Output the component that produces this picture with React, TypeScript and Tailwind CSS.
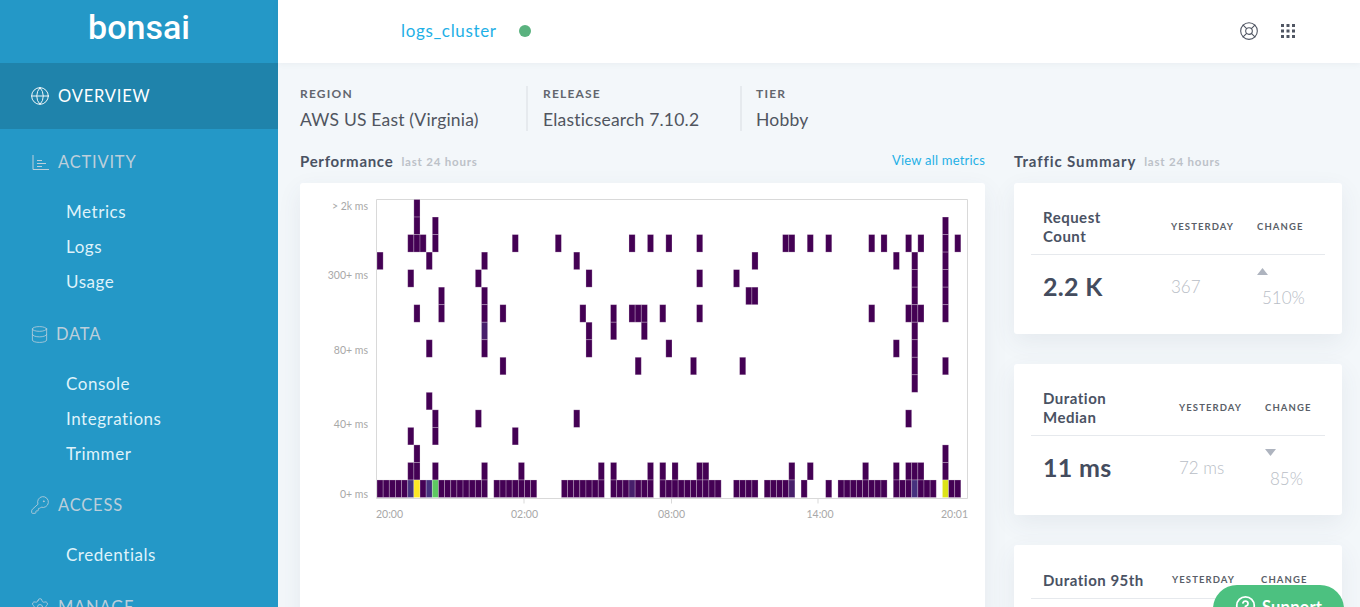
import React from 'react';
import { Globe, Database, KeyRound, Settings, LifeBuoy, CircleHelp } from 'lucide-react';

const font = '[font-family:Lato,"Open_Sans",sans-serif]';

// heatmap buckets, row -> columns (96 columns, 17 rows, top row is slowest)
const rows: number[][] = [
  [6],
  [6, 9, 92],
  [5, 6, 7, 9, 22, 29, 41, 44, 47, 52, 66, 67, 70, 73, 80, 82, 86, 88, 92, 94],
  [0, 8, 17, 32, 61, 84, 87, 92],
  [5, 16, 34, 52, 58, 87, 92],
  [10, 17, 60, 61, 87, 92],
  [6, 10, 17, 20, 33, 38, 41, 42, 43, 46, 52, 80, 86, 87, 88, 92],
  [17, 34, 38, 43, 87],
  [8, 17, 34, 47, 84, 87],
  [20, 42, 51, 59, 87, 92],
  [87],
  [8],
  [9, 16, 32, 86],
  [5, 9, 22],
  [6, 92],
  [5, 6, 9, 17, 23, 36, 38, 44, 46, 48, 52, 53, 67, 70, 79, 84, 86, 87, 88, 92],
];

const range = (a: number, b: number) => Array.from({ length: b - a + 1 }, (_, i) => a + i);
const bottomRow = [
  ...range(0, 17), ...range(19, 25), ...range(30, 36), ...range(38, 44), ...range(46, 55),
  ...range(58, 61), ...range(63, 67), 69, 73, ...range(75, 82), ...range(84, 90), 92, 93, 94,
];
const special: Record<number, string> = {
  5: '#46327e',
  6: '#fde725',
  8: '#46327e',
  9: '#5ec962',
  41: '#471f6b',
  67: '#471f6b',
  87: '#46327e',
  92: '#dde318',
};

const cellW = 590 / 96;
const cellH = 298 / 17;

function Heatmap() {
  const ox = 77;
  const oy = 16.5;
  const cell = (r: number, c: number, fill: string) => (
    <rect
      key={`${r}-${c}`}
      x={ox + c * cellW}
      y={oy + r * cellH}
      width={cellW}
      height={cellH}
      fill={fill}
      stroke="#fff"
      strokeOpacity={0.3}
      strokeWidth={0.8}
    />
  );
  return (
    <svg width="685" height="345" className="block" fontFamily="Lato, sans-serif" fontSize="10.5" fill="#a8a8a8">
      <path d="M76.5 16.5H667.5V315.5H76.5Z" fill="none" stroke="#d9d9d9" />
      {rows.map((cols, r) => cols.map(c => cell(r, c, r === 7 && c === 17 ? '#471f6b' : '#440154')))}
      {bottomRow.map(c => cell(16, c, special[c] ?? '#440154'))}
      {[224, 371.5, 518].map(x => (
        <path key={x} d={`M${x} 315.5V320.5`} stroke="#d9d9d9" />
      ))}
      <text x="68" y="27" textAnchor="end">&gt; 2k ms</text>
      <text x="68" y="96" textAnchor="end">300+ ms</text>
      <text x="68" y="171" textAnchor="end">80+ ms</text>
      <text x="68" y="245" textAnchor="end">40+ ms</text>
      <text x="68" y="315" textAnchor="end">0+ ms</text>
      <text x="76" y="335">20:00</text>
      <text x="224.5" y="335" textAnchor="middle">02:00</text>
      <text x="371.5" y="335" textAnchor="middle">08:00</text>
      <text x="520" y="335" textAnchor="middle">14:00</text>
      <text x="668" y="335" textAnchor="end">20:01</text>
    </svg>
  );
}

function ChartIcon() {
  return (
    <svg width="17" height="17" viewBox="0 0 17 17" fill="none" stroke="currentColor" strokeWidth="1" className="ml-[2px]">
      <path d="M1 1V15.5H17M5 6.5H10M5 9.5H14M5 12.5H10" />
    </svg>
  );
}

function NavHead({ icon, label, gap }: { icon: React.ReactNode; label: string; gap: string }) {
  return (
    <div className={`flex items-center pl-[30px] h-[24px] text-[#bccfdb] text-[16.5px] tracking-[0.8px] ${gap}`}>
      {icon}
      <span>{label}</span>
    </div>
  );
}

function NavSub({ items }: { items: string[] }) {
  return (
    <div className="pl-[66px] mt-[26px] flex flex-col gap-[11px] text-[17px] leading-[24px] tracking-[0.55px] text-[#dff2fa]">
      {items.map(item => (
        <div key={item}>{item}</div>
      ))}
    </div>
  );
}

function Sidebar() {
  return (
    <aside className="w-[278px] shrink-0 h-full bg-[#2498c7] overflow-hidden">
      <div className="h-[63px] flex items-center justify-center pb-[8px] text-white text-[34px] font-medium [font-family:Roboto,sans-serif]">
        bonsai
      </div>
      <div className="h-[66px] bg-[#1f83ab] flex items-center pl-[30px] gap-[8px] text-white text-[16.5px] tracking-[0.8px]">
        <Globe size={20} strokeWidth={1.1} />
        <span>OVERVIEW</span>
      </div>
      <div className="mt-[21px]">
        <NavHead icon={<ChartIcon />} label="ACTIVITY" gap="gap-[9px]" />
        <NavSub items={['Metrics', 'Logs', 'Usage']} />
      </div>
      <div className="mt-[28px]">
        <NavHead icon={<Database size={19} strokeWidth={1} />} label="DATA" gap="gap-[7px]" />
        <NavSub items={['Console', 'Integrations', 'Trimmer']} />
      </div>
      <div className="mt-[27px]">
        <NavHead icon={<KeyRound size={20} strokeWidth={1} />} label="ACCESS" gap="gap-[8px]" />
        <NavSub items={['Credentials']} />
      </div>
      <div className="mt-[28px]">
        <NavHead icon={<Settings size={20} strokeWidth={1} />} label="MANAGE" gap="gap-[8px]" />
      </div>
    </aside>
  );
}

function Meta({ label, value, className }: { label: string; value: string; className: string }) {
  return (
    <div className={className}>
      <div className="text-[12px] font-bold tracking-[1.2px] leading-[16px] text-[#62666e]">{label}</div>
      <div className="mt-[6px] text-[17.5px] leading-[24px] tracking-[0.2px] text-[#50555f]">{value}</div>
    </div>
  );
}

function Summary({
  title,
  cols,
  head,
  value,
  prev,
  change,
  up,
}: {
  title: React.ReactNode;
  cols: string;
  head: string;
  value?: string;
  prev?: string;
  change?: string;
  up?: boolean;
}) {
  return (
    <div className="bg-white rounded-[3px] shadow-[0_8px_24px_rgba(60,80,100,0.08)] px-[17px] pt-[17px] pb-[17px]">
      <div className={`grid items-center pl-3 border-b border-[#e6e9ed] ${cols} ${head}`}>
        <div className="text-[15px] font-bold leading-[19px] tracking-[0.5px] text-[#4a5263]">{title}</div>
        <div className="text-[9.5px] font-bold tracking-[1.1px] text-[#5a5f69]">YESTERDAY</div>
        <div className="text-[9.5px] font-bold tracking-[1.1px] text-[#5a5f69]">CHANGE</div>
      </div>
      {value && (
        <div className={`grid pl-3 h-[62px] ${cols}`}>
          <div className="self-center mt-[2px] text-[25px] font-bold text-[#444c5e] tracking-[0.3px]">{value}</div>
          <div className="self-center mt-[2px] text-[17px] text-[#b8bdc6] font-light">{prev}</div>
          <div className="relative text-[17px] text-[#b8bdc6] font-light">
            <svg width="11" height="7" viewBox="0 0 11 7" className="absolute left-0 top-[13px]" fill="#aeb4bf">
              <path d={up ? 'M5.5 0L11 7H0Z' : 'M0 0H11L5.5 7Z'} />
            </svg>
            <span className="absolute left-[5px] top-[31px] leading-[24px]">{change}</span>
          </div>
        </div>
      )}
    </div>
  );
}

export default function App() {
  return (
    <div className={`relative flex w-[1360px] h-[607px] overflow-hidden bg-[#f3f7fa] ${font}`}>
      <Sidebar />
      <div className="flex-1 min-w-0 flex flex-col">
        <header className="h-[63px] shrink-0 bg-white shadow-[0_1px_6px_rgba(60,80,100,0.06)] flex items-center pl-[123px] pr-[64px] pb-[2px]">
          <span className="text-[17px] tracking-[0.65px] text-[#1fb0e6]">logs_cluster</span>
          <span className="ml-[22px] w-3 h-3 rounded-full bg-[#5ab27f]" />
          <div className="ml-auto flex items-center gap-[21px] text-[#4f5562]">
            <LifeBuoy size={20} strokeWidth={1.3} />
            <svg width="16" height="16" viewBox="0 0 16 16" fill="currentColor">
              {[1, 6.5, 12].map(y =>
                [1, 6.5, 12].map(x => <rect key={`${x}-${y}`} x={x} y={y} width="3" height="3" />)
              )}
            </svg>
          </div>
        </header>

        <div className="flex pl-[22px] pt-[23px]">
          <Meta label="REGION" value="AWS US East (Virginia)" className="w-[228px] h-[45px] border-r-2 border-[#e6eaee]" />
          <Meta label="RELEASE" value="Elasticsearch 7.10.2" className="w-[214px] h-[45px] pl-[15px] border-r-2 border-[#e6eaee]" />
          <Meta label="TIER" value="Hobby" className="pl-[14px]" />
        </div>

        <div className="flex pl-[22px] pr-[18px] gap-[29px] mt-[17px]">
          <section className="w-[685px] shrink-0">
            <div className="h-[24px] flex items-center">
              <span className="text-[15px] font-bold tracking-[0.7px] text-[#4a5263]">Performance</span>
              <span className="ml-[8px] mt-[1px] text-[11.5px] font-bold tracking-[0.8px] text-[#bcc1c8]">last 24 hours</span>
              <span className="ml-auto text-[13px] tracking-[0.2px] text-[#1fb0e6]">View all metrics</span>
            </div>
            <div className="mt-[10px] bg-white rounded-[3px] shadow-[0_8px_24px_rgba(60,80,100,0.08)] h-[500px]">
              <Heatmap />
            </div>
          </section>

          <section className="flex-1 min-w-0">
            <div className="h-[24px] flex items-center">
              <span className="text-[15px] font-bold tracking-[0.9px] text-[#4a5263]">Traffic Summary</span>
              <span className="ml-[8px] mt-[1px] text-[11.5px] font-bold tracking-[0.8px] text-[#bcc1c8]">last 24 hours</span>
            </div>
            <div className="mt-[10px] flex flex-col gap-[30px]">
              <Summary
                title={<>Request<br />Count</>}
                cols="grid-cols-[128px_86px_1fr]"
                head="h-[55px]"
                value="2.2 K"
                prev="367"
                change="510%"
                up
              />
              <Summary
                title={<>Duration<br />Median</>}
                cols="grid-cols-[136px_86px_1fr]"
                head="h-[55px]"
                value="11 ms"
                prev="72 ms"
                change="85%"
              />
              <Summary title="Duration 95th" cols="grid-cols-[129px_89px_1fr]" head="h-[37px]" />
            </div>
          </section>
        </div>
      </div>

      <div className="absolute left-[1213px] top-[585px] w-[131px] h-[50px] rounded-t-[24px] bg-[#4cc180] text-white flex items-start gap-[6px] pt-[10px] pl-[22px] text-[16.5px] font-bold tracking-[0.2px]">
        <CircleHelp size={21} strokeWidth={2} />
        <span>Support</span>
      </div>
    </div>
  );
}
